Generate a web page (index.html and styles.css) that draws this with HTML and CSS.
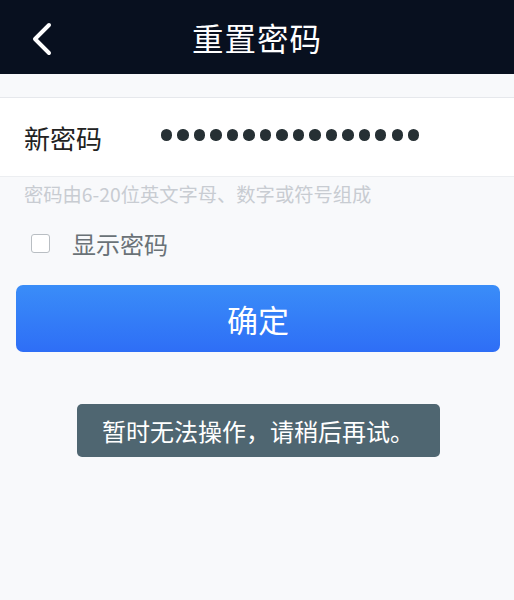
FILE: index.html
```html
<!DOCTYPE html>
<html lang="zh">
<head>
<meta charset="utf-8">
<link rel="stylesheet" href="styles.css">
</head>
<body>
<div class="page">
  <header class="nav">
    <svg class="back" width="24" height="34" viewBox="0 0 24 34"><path d="M19 3 L5 17 L19 31" fill="none" stroke="#fff" stroke-width="4" stroke-linecap="round" stroke-linejoin="round"/></svg>
    <h1 class="title">重置密码</h1>
  </header>
  <div class="gap"></div>
  <div class="row">
    <span class="label">新密码</span>
    <span class="dots" aria-label="password">
      <i></i><i></i><i></i><i></i><i></i><i></i><i></i><i></i>
      <i></i><i></i><i></i><i></i><i></i><i></i><i></i><i></i>
    </span>
  </div>
  <p class="hint">密码由6-20位英文字母、数字或符号组成</p>
  <label class="show">
    <span class="box"></span>
    <span class="show-text">显示密码</span>
  </label>
  <button class="btn">确定</button>
  <div class="toast-wrap">
    <div class="toast">暂时无法操作，请稍后再试。</div>
  </div>
</div>
</body>
</html>
```
FILE: styles.css
```css
html, body {
  margin: 0;
  padding: 0;
  background: #f8f9fb;
  font-family: "Noto Sans CJK SC", "Noto Sans", sans-serif;
}
.page {
  width: 514px;
  height: 600px;
  background: #f8f9fb;
  overflow: hidden;
}
.nav {
  height: 74px;
  background: #08101f;
  position: relative;
  display: flex;
  align-items: center;
  justify-content: center;
}
.back {
  position: absolute;
  left: 30px;
  top: 22px;
}
.title {
  margin: 0;
  color: #ffffff;
  font-size: 31.5px;
  font-weight: 400;
  letter-spacing: 1px;
}
.gap {
  height: 23px;
  border-bottom: 1px solid #e6e8ec;
}
.row {
  height: 78px;
  background: #ffffff;
  border-bottom: 1px solid #eceef1;
  display: flex;
  align-items: center;
  padding-left: 24px;
}
.label {
  font-size: 26px;
  color: #222;
  width: 137px;
}
.dots {
  display: flex;
  gap: 5.3px;
  margin-top: -4px;
}
.dots i {
  display: block;
  width: 11.2px;
  height: 11.2px;
  border-radius: 50%;
  background: #263034;
}
.hint {
  margin: 0;
  padding: 4px 0 0 24px;
  height: 30px;
  font-size: 19.3px;
  line-height: 26px;
  color: #c8ccd2;
}
.show {
  display: flex;
  align-items: center;
  padding-left: 31px;
  height: 36px;
  margin-top: 14px;
}
.box {
  width: 17px;
  height: 17px;
  border: 1px solid #b9bec3;
  border-radius: 3px;
  background: #fff;
}
.show-text {
  margin-left: 22px;
  font-size: 24px;
  color: #6a7277;
}
.btn {
  display: block;
  margin: 24px 14px 0 16px;
  width: 484px;
  height: 67px;
  border: 0;
  border-radius: 7px;
  background: linear-gradient(#3a8df8, #2e6ef6);
  color: #fff;
  font-family: "Noto Sans CJK SC", sans-serif;
  font-size: 31px;
  padding: 0;
}
.toast-wrap {
  padding-left: 77px;
  margin-top: 52px;
}
.toast {
  width: 363px;
  height: 53px;
  box-sizing: border-box;
  background: #4f6671;
  border-radius: 5px;
  color: #fff;
  font-size: 24px;
  line-height: 53px;
  padding-left: 25px;
}
```
